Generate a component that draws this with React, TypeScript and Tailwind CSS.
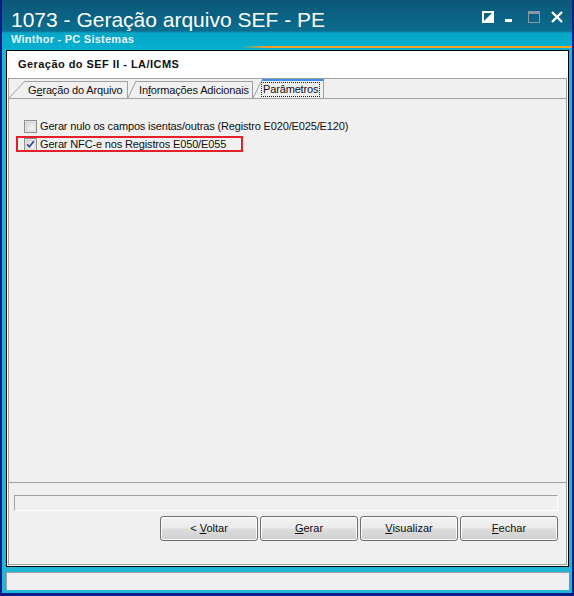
import React from "react";

const F = { fontFamily: '"Liberation Sans", Arial, sans-serif' };

function CheckBox({ checked }: { checked?: boolean }) {
  return (
    <svg width="13" height="13" viewBox="0 0 13 13" className="shrink-0">
      <defs>
        <linearGradient id={checked ? "cbg1" : "cbg0"} x1="0" y1="0" x2="1" y2="1">
          <stop offset="0" stopColor="#d6d6d6" />
          <stop offset="1" stopColor="#fbfbfb" />
        </linearGradient>
      </defs>
      <rect x="0.5" y="0.5" width="12" height="12" fill="#f4f4f4" stroke="#8e8f8f" />
      <rect x="2" y="2" width="9" height="9" fill={`url(#${checked ? "cbg1" : "cbg0"})`} stroke="#bcbcbc" strokeWidth="0.6" />
      {checked && (
        <path d="M3.2 6.4 L5.4 8.8 L9.8 3.2" fill="none" stroke="#34418c" strokeWidth="1.7" />
      )}
    </svg>
  );
}

function Btn({ pre, u, rest }: { pre?: string; u: string; rest: string }) {
  return (
    <div
      className="w-[98px] h-[25px] rounded-[3px] border border-[#707070] flex items-center justify-center text-[11px] text-[#111] shadow-[inset_0_0_0_1px_#fbfbfb]"
      style={{ ...F, background: "linear-gradient(#f3f3f3 0%, #ebebeb 48%, #dddddd 52%, #cfcfcf 100%)" }}
    >
      <span>
        {pre}
        <span className="underline">{u}</span>
        {rest}
      </span>
    </div>
  );
}

function Slant({ w, h, y0 = 0 }: { w: number; h: number; y0?: number }) {
  return (
    <svg width={w} height={h} viewBox={`0 0 ${w} ${h}`} className="shrink-0 block">
      <polygon points={`0,${h} ${w},${y0} ${w},${h}`} fill="#f0f0f0" />
      <line x1="0" y1={h} x2={w} y2={y0} stroke="#a0a0a0" strokeWidth="1" />
    </svg>
  );
}

export default function App() {
  return (
    <div className="w-[574px] h-[596px] bg-[#0b1d8a] px-[2px] pb-[3px] flex flex-col" style={F}>
      <div className="flex-1 flex flex-col bg-[#22b6d6] pb-[3px]">
        {/* Title */}
        <div
          className="relative h-[50px] shrink-0 flex justify-between pl-[9px] pr-[9px]"
          style={{
            background:
              "linear-gradient(to bottom, #0c5676 0%, #0b6587 40%, #0b6d8e 62%, #07a6c6 66%, #06b0d0 100%)",
          }}
        >
          <div className="flex flex-col pt-[8px]">
            <div className="text-[21px] leading-[24px] text-white">1073 - Geração arquivo SEF - PE</div>
            <div className="text-[11px] leading-[13px] font-bold tracking-[0.25px] text-[#e6f4f8] mt-[1px]">Winthor - PC Sistemas</div>
          </div>
          <div className="flex gap-[11px] pt-[11px]">
            <svg width="12" height="12" viewBox="0 0 12 12">
              <rect x="1" y="1" width="10" height="10" fill="none" stroke="#fff" strokeWidth="2" />
              <polygon points="11,1 11,11 1,11" fill="#fff" />
            </svg>
            <svg width="12" height="12" viewBox="0 0 12 12">
              <rect x="0" y="8" width="7" height="3" fill="#fff" />
            </svg>
            <svg width="12" height="12" viewBox="0 0 12 12">
              <rect x="0.5" y="0.5" width="11" height="11" fill="none" stroke="#8a98a6" strokeWidth="1" />
              <rect x="0" y="0" width="12" height="3" fill="#8a98a6" />
            </svg>
            <svg width="12" height="12" viewBox="0 0 12 12">
              <path d="M1 1 L11 11 M11 1 L1 11" stroke="#fff" strokeWidth="2.4" />
            </svg>
          </div>
          <div
            className="absolute left-[238px] right-0 bottom-[2px] h-[2px]"
            style={{ background: "linear-gradient(to right, rgba(240,160,40,0), #f0a028 8%, #f4a21e 100%)" }}
          />
        </div>

        {/* Panel */}
        <div className="ml-[4px] mr-[3px] h-[517px] shrink-0 border border-black bg-white">
          <div className="h-full border-x border-b border-white flex flex-col bg-[#f0f0f0]">
            <div className="h-[27px] shrink-0 bg-white flex items-center pl-[10px] text-[11px] font-bold tracking-[0.45px] text-[#111]">
              Geração do SEF II - LA/ICMS
            </div>
            <div className="h-px shrink-0 bg-[#a0a0a0]" />
            <div className="flex-1 flex flex-col border-x border-b border-[#a0a0a0] text-[11px] tracking-[-0.15px] text-[#111]">
              {/* tab strip */}
              <div className="h-[20px] shrink-0 flex items-end border-b border-[#a0a0a0]">
                <div className="flex items-end relative z-10">
                  <Slant w={16} h={17} />
                  <div className="w-[103px] h-[17px] border-t border-r border-[#a0a0a0] bg-[#f0f0f0] pl-[3px] pt-[2px] leading-[13px] whitespace-nowrap">
                    G<span className="underline">e</span>ração do Arquivo
                  </div>
                </div>
                <div className="flex items-end">
                  <Slant w={8} h={17} y0={0} />
                  <div className="w-[117px] h-[17px] border-t border-r border-[#a0a0a0] bg-[#f0f0f0] pl-[3px] pt-[2px] leading-[13px] whitespace-nowrap">
                    In<span className="underline">f</span>ormações Adicionais
                  </div>
                </div>
                <div className="flex items-end">
                  <Slant w={9} h={19} y0={1} />
                  <div className="w-[62px] h-[19px] border-t-2 border-t-[#3c8ee6] border-r border-r-[#a0a0a0] bg-[#f0f0f0] pt-[2px] leading-[13px] whitespace-nowrap">
                    <span className="inline-block px-px outline-1 outline-dotted outline-[#222] outline-offset-0">Parâmetros</span>
                  </div>
                </div>
              </div>
              {/* tab content */}
              <div className="h-[384px] shrink-0 relative border-b border-[#a0a0a0] pt-[21px] pl-[15px] flex flex-col gap-[5px]">
                <div className="flex items-center gap-[3px] h-[13px]">
                  <CheckBox />
                  <span className="leading-[13px] whitespace-nowrap">Gerar nulo os campos isentas/outras (Registro E020/E025/E120)</span>
                </div>
                <div className="flex items-center gap-[3px] h-[13px]">
                  <CheckBox checked />
                  <span className="leading-[13px] whitespace-nowrap">Gerar NFC-e nos Registros E050/E055</span>
                </div>
                <div className="absolute left-[7px] top-[37px] w-[227px] h-[16px] border-2 border-[#e4212b]" />
              </div>
              {/* bottom area */}
              <div className="flex-1 flex flex-col pt-[12px]">
                <div className="ml-[5px] w-[544px] h-[16px] border-t border-l border-[#a0a0a0] border-b border-r border-b-white border-r-white" />
                <div className="mt-[5px] flex justify-end gap-[2px] pr-[8px] tracking-normal">
                  <Btn pre="< " u="V" rest="oltar" />
                  <Btn u="G" rest="erar" />
                  <Btn u="V" rest="isualizar" />
                  <Btn u="F" rest="echar" />
                </div>
              </div>
            </div>
          </div>
        </div>

        {/* Status */}
        <div className="mt-[5px] ml-[4px] mr-[3px] h-[18px] shrink-0 bg-[#f0f0f0] border-t border-l border-[#a0a0a0]" />
      </div>
    </div>
  );
}
